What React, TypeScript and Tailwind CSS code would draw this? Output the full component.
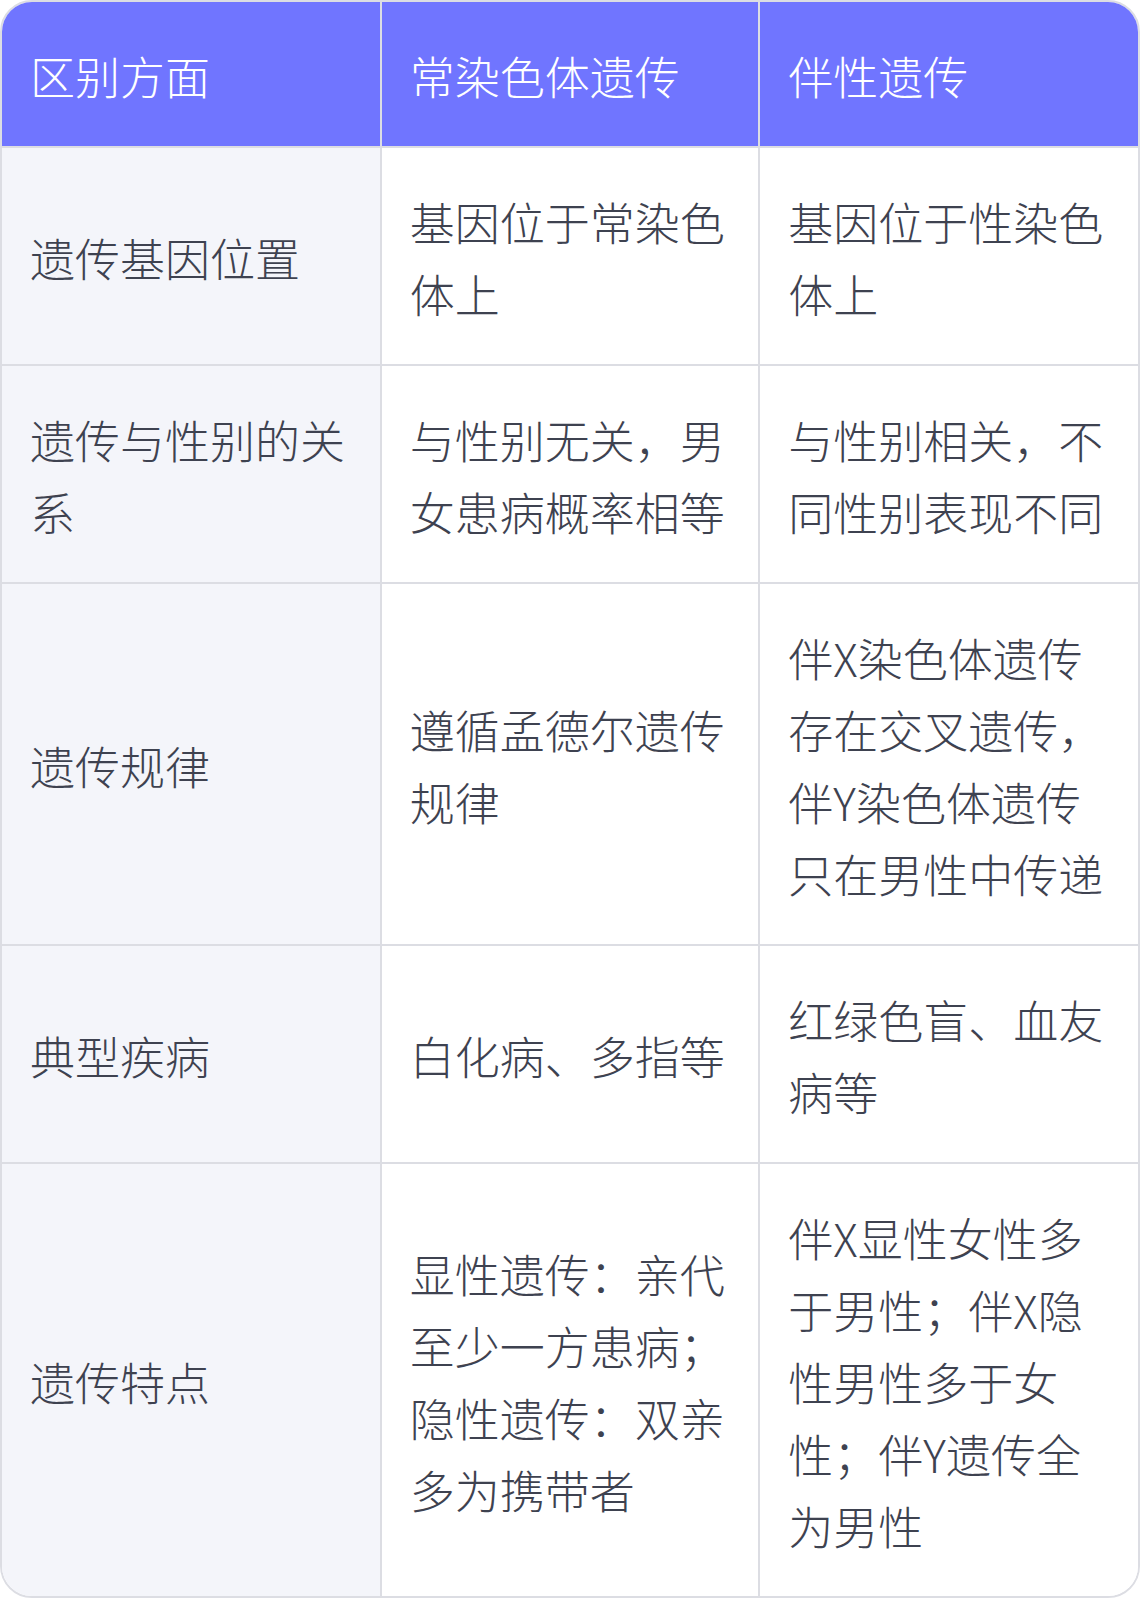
const head = ['区别方面', '常染色体遗传', '伴性遗传'];

const rows: string[][] = [
  ['遗传基因位置', '基因位于常染色体上', '基因位于性染色体上'],
  ['遗传与性别的关系', '与性别无关，男女患病概率相等', '与性别相关，不同性别表现不同'],
  ['遗传规律', '遵循孟德尔遗传规律', '伴X染色体遗传存在交叉遗传，伴Y染色体遗传只在男性中传递'],
  ['典型疾病', '白化病、多指等', '红绿色盲、血友病等'],
  [
    '遗传特点',
    '显性遗传：亲代至少一方患病；隐性遗传：双亲多为携带者',
    '伴X显性女性多于男性；伴X隐性男性多于女性；伴Y遗传全为男性',
  ],
];

export default function App() {
  return (
    <div className="w-[1140px] bg-white">
      <div className="border-2 border-[#dcdde3] rounded-[32px] overflow-hidden">
        <table
          className="w-full table-fixed border-collapse text-[45px] leading-[72px] font-light text-[#3e4250]"
          style={{ fontFamily: '"Noto Sans CJK SC", "Noto Sans", sans-serif' }}
        >
          <thead>
            <tr className="bg-[#7075ff] text-white">
              {head.map((h, i) => (
                <th
                  key={h}
                  className={`px-7 pt-[38px] pb-[34px] text-left font-light align-middle ${i > 0 ? 'border-l-2 border-[#dcdde3]' : ''}`}
                >
                  {h}
                </th>
              ))}
            </tr>
          </thead>
          <tbody>
            {rows.map((r, ri) => (
              <tr key={ri} className="border-t-2 border-[#dcdde3]">
                {r.map((c, ci) => (
                  <td
                    key={ci}
                    className={`px-7 pt-[38px] pb-[34px] align-middle ${ci === 0 ? 'bg-[#f4f5fa]' : 'bg-white border-l-2 border-[#dcdde3]'}`}
                  >
                    {c}
                  </td>
                ))}
              </tr>
            ))}
          </tbody>
        </table>
      </div>
    </div>
  );
}
